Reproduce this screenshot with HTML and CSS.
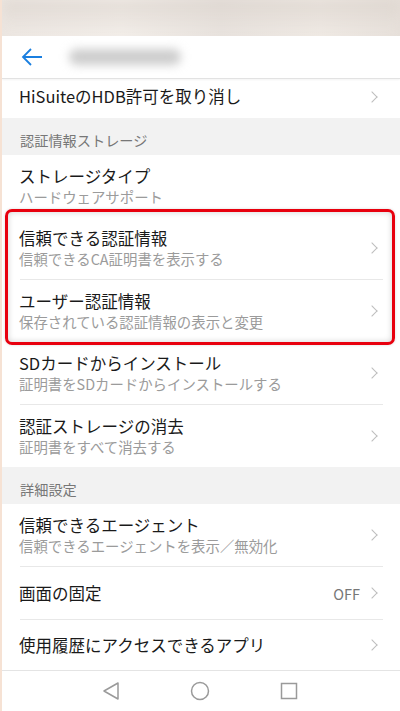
FILE: index.html
```html
<!DOCTYPE html>
<html lang="ja">
<head>
    <meta charset="UTF-8">
    <meta name="viewport" content="width=device-width, initial-scale=1.0">
    <title>セキュリティ</title>
    <link rel="stylesheet" href="styles.css">
</head>
<body>
    <div class="screen">
        <div class="status-bar"><div class="status-blur"></div></div>

        <div class="app-bar">
            <svg class="back" width="22" height="18" viewBox="0 0 22 18">
                <path d="M21 9H2M10 1L2 9l8 8" fill="none" stroke="#1a7fe0" stroke-width="1.8"/>
            </svg>
            <div class="title-blur"></div>
        </div>

        <div class="list">
            <div class="row row-top">
                <div class="texts"><p class="title">HiSuiteのHDB許可を取り消し</p></div>
                <span class="chevron"></span>
            </div>

            <div class="section">認証情報ストレージ</div>

            <div class="row">
                <div class="texts">
                    <p class="title">ストレージタイプ</p>
                    <p class="sub">ハードウェアサポート</p>
                </div>
            </div>

            <div class="highlight">
                <div class="row">
                    <div class="texts">
                        <p class="title">信頼できる認証情報</p>
                        <p class="sub">信頼できるCA証明書を表示する</p>
                    </div>
                    <span class="chevron"></span>
                </div>
                <div class="divider"></div>
                <div class="row">
                    <div class="texts">
                        <p class="title">ユーザー認証情報</p>
                        <p class="sub">保存されている認証情報の表示と変更</p>
                    </div>
                    <span class="chevron"></span>
                </div>
                <div class="red-box"></div>
            </div>

            <div class="row">
                <div class="texts">
                    <p class="title">SDカードからインストール</p>
                    <p class="sub">証明書をSDカードからインストールする</p>
                </div>
                <span class="chevron"></span>
            </div>
            <div class="divider"></div>
            <div class="row">
                <div class="texts">
                    <p class="title">認証ストレージの消去</p>
                    <p class="sub">証明書をすべて消去する</p>
                </div>
                <span class="chevron"></span>
            </div>

            <div class="section">詳細設定</div>

            <div class="row">
                <div class="texts">
                    <p class="title">信頼できるエージェント</p>
                    <p class="sub">信頼できるエージェントを表示／無効化</p>
                </div>
                <span class="chevron"></span>
            </div>
            <div class="divider"></div>
            <div class="row row-single">
                <div class="texts"><p class="title">画面の固定</p></div>
                <span class="value">OFF</span>
                <span class="chevron"></span>
            </div>
            <div class="divider"></div>
            <div class="row row-single row-last">
                <div class="texts"><p class="title">使用履歴にアクセスできるアプリ</p></div>
                <span class="chevron"></span>
            </div>
        </div>

        <div class="nav-bar">
            <svg width="18" height="20" viewBox="0 0 18 20">
                <path d="M16 2L2 10l14 8z" fill="none" stroke="#9a9a9a" stroke-width="1.5" stroke-linejoin="round"/>
            </svg>
            <svg width="20" height="20" viewBox="0 0 20 20">
                <circle cx="10" cy="10" r="8.5" fill="none" stroke="#9a9a9a" stroke-width="1.5"/>
            </svg>
            <svg width="18" height="18" viewBox="0 0 18 18">
                <rect x="1.5" y="1.5" width="15" height="15" fill="none" stroke="#9a9a9a" stroke-width="1.5"/>
            </svg>
        </div>
    </div>
</body>
</html>
```

FILE: styles.css
```css
body {
    margin: 0;
    font-family: "Noto Sans CJK JP", "Noto Sans", sans-serif;
    background-color: #ffffff;
}
p {
    margin: 0;
}
.screen {
    width: 400px;
    height: 711px;
    overflow: hidden;
    display: flex;
    flex-direction: column;
    border-left: 2px solid #f6e2d4;
    box-sizing: border-box;
}
.status-bar {
    height: 36px;
    background: linear-gradient(90deg, #ece6e1, #f3eee9 30%, #e7e1dc 55%, #efe9e3 80%, #e6dfd9);
    overflow: hidden;
}
.status-blur {
    height: 100%;
    background: linear-gradient(180deg, rgba(215, 207, 200, 0.6), rgba(246, 242, 238, 0.2));
    filter: blur(6px);
}
.app-bar {
    height: 42px;
    display: flex;
    align-items: center;
    padding-left: 19px;
    border-bottom: 1px solid #e2e2e2;
    box-shadow: 0 1px 2px rgba(0, 0, 0, 0.05);
}
.back {
    margin-right: 26px;
}
.title-blur {
    width: 112px;
    height: 16px;
    border-radius: 8px;
    background-color: #cdcdcd;
    filter: blur(5px);
}
.list {
    flex: 1;
    display: flex;
    flex-direction: column;
}
.row {
    display: flex;
    align-items: center;
    padding: 10px 18px 10px 17px;
    height: 42px;
}
.row-top {
    height: 22px;
    padding-top: 6px;
    padding-bottom: 11px;
    align-items: flex-start;
}
.row-single {
    height: 32px;
    padding-top: 10px;
    padding-bottom: 10px;
}
.row-last {
    height: 29px;
}
.texts {
    flex: 1;
}
.title {
    font-size: 16.5px;
    line-height: 22px;
    color: #1a1a1a;
}
.sub {
    font-size: 14.4px;
    line-height: 20px;
    color: #9b9b9b;
}
.section {
    height: 37px;
    box-sizing: border-box;
    padding: 12px 18px 0 18px;
    font-size: 14.2px;
    line-height: 20px;
    color: #777777;
    background-color: #f2f2f2;
}
.divider {
    height: 1px;
    margin: 0 17px 0 18px;
    background-color: #e8e8e8;
}
.chevron {
    width: 7px;
    height: 7px;
    margin-right: 6px;
    border-top: 1.2px solid #bdbdbd;
    border-right: 1.2px solid #bdbdbd;
    transform: rotate(45deg);
}
.row-top .chevron {
    margin-top: 8px;
}
.value {
    font-size: 14.5px;
    color: #777777;
    margin-right: 8px;
}
.highlight {
    position: relative;
}
.red-box {
    position: absolute;
    top: -8px;
    bottom: -3px;
    left: 3px;
    right: 5px;
    border: 3px solid #e8000e;
    border-radius: 7px;
    box-shadow: inset 0 0 6px rgba(0, 0, 0, 0.18), 0 0 3px rgba(0, 0, 0, 0.15);
}
.nav-bar {
    height: 40px;
    border-top: 1px solid #e4e4e4;
    display: flex;
    align-items: center;
    justify-content: center;
    gap: 70px;
    padding-right: 2px;
}
```
